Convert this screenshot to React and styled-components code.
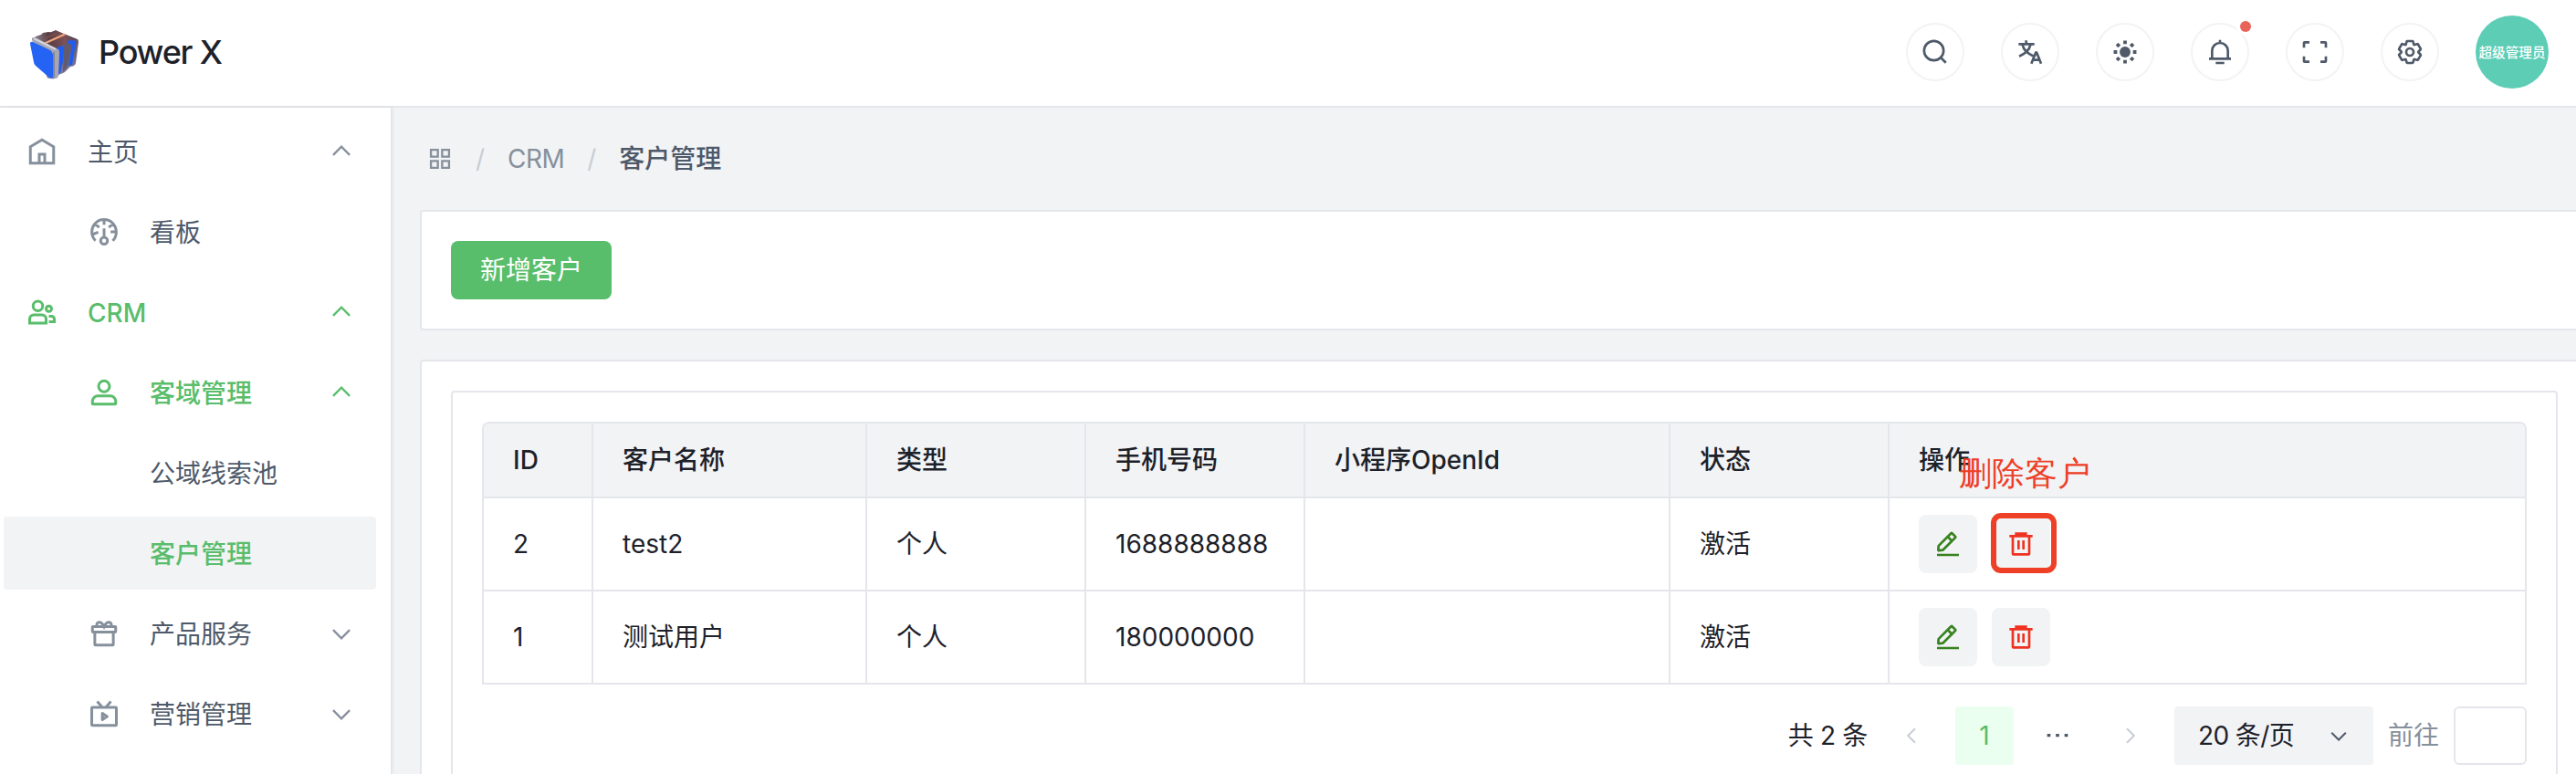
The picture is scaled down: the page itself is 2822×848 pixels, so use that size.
import React from "react";
import styled, { createGlobalStyle } from "styled-components";

const GlobalStyle = createGlobalStyle`
  *, *::before, *::after { box-sizing: border-box; }
  html, body { margin: 0; padding: 0; background: #f2f3f5; }
  body {
    font-family: Inter, "Noto Sans CJK SC", sans-serif;
    font-size: 28px;
    line-height: 44px;
    color: #1d2129;
    overflow: hidden;
  }
`;

const Page = styled.div`
  display: flex;
  flex-direction: column;
  width: 2822px;
  height: 848px;
  overflow: hidden;
`;

const Header = styled.header`
  flex: none;
  display: flex;
  align-items: center;
  justify-content: space-between;
  height: 118px;
  padding: 0 30px 2px 32px;
  background: #fff;
  border-bottom: 2px solid #e5e6eb;
`;

const Brand = styled.div`
  display: flex;
  align-items: center;
  gap: 20px;
  padding-top: 3px;
`;

const BrandName = styled.h1`
  margin: -3px 0 0;
  font-size: 36px;
  line-height: 44px;
  font-weight: 500;
  letter-spacing: -1.2px;
`;

const Tools = styled.div`
  display: flex;
  align-items: center;
  gap: 40px;
`;

const ToolButton = styled.button`
  position: relative;
  display: flex;
  align-items: center;
  justify-content: center;
  width: 64px;
  height: 64px;
  padding: 0;
  border: 2px solid #f2f3f5;
  border-radius: 50%;
  background: #fff;
  color: #4e5969;
`;

const Dot = styled.span`
  position: absolute;
  top: -4px;
  right: -4px;
  width: 12px;
  height: 12px;
  border-radius: 50%;
  background: #e9635b;
  box-shadow: 0 0 0 4px #fff;
`;

const Avatar = styled.div`
  display: flex;
  align-items: center;
  justify-content: center;
  width: 80px;
  height: 80px;
  padding-top: 1px;
  border-radius: 50%;
  background: #5dcdb6;
  color: #fff;
  font-size: 14.6px;
  font-weight: 500;
  white-space: nowrap;
`;

const Body = styled.div`
  flex: 1;
  display: flex;
  min-height: 0;
`;

const Sidebar = styled.nav`
  flex: none;
  display: flex;
  flex-direction: column;
  gap: 8px;
  width: 430px;
  padding: 8px 16px 0 4px;
  background: #fff;
  border-right: 2px solid #e5e6eb;
  box-shadow: 0 0 4px rgba(0, 0, 0, 0.06);
`;

const MenuItem = styled.div`
  flex: none;
  display: flex;
  align-items: center;
  height: 80px;
  padding-left: ${(p) => (p.$level === 0 ? 24 : p.$level === 1 ? 92 : 160)}px;
  padding-right: 24px;
  border-radius: 4px;
  background: ${(p) => (p.$selected ? "#f2f3f5" : "transparent")};
  color: ${(p) => (p.$active ? "#59bd6b" : "#4e5969")};
  font-weight: ${(p) => (p.$active ? 500 : 400)};
`;

const MenuIcon = styled.span`
  display: flex;
  margin-right: 32px;
  color: ${(p) => (p.$active ? "inherit" : "#86909c")};
`;

const MenuLabel = styled.span`
  flex: 1;
  padding-top: 1px;
  line-height: 40px;
`;

const MenuArrow = styled.span`
  display: flex;
  color: ${(p) => (p.$active ? "inherit" : "#86909c")};
`;

const Main = styled.main`
  flex: none;
  display: flex;
  flex-direction: column;
  width: 2424px;
  padding-left: 30px;
`;

const Breadcrumb = styled.div`
  flex: none;
  display: flex;
  align-items: center;
  height: 112px;
  color: #86909c;
  line-height: 48px;
`;

const Crumb = styled.span`
  display: flex;
  padding: 0 8px;
  letter-spacing: ${(p) => (p.$current ? 0 : -0.5)}px;
  color: ${(p) => (p.$current ? "#4e5969" : "#86909c")};
  font-weight: ${(p) => (p.$current ? 500 : 400)};
`;

const Separator = styled.span`
  width: 28px;
  margin: 0 8px;
  text-align: center;
  color: #c9cdd4;
`;

const Card = styled.section`
  flex: none;
  padding: 32px;
  margin-bottom: 32px;
  background: #fff;
  border: 2px solid #e5e6eb;
  border-radius: 4px;
`;

const InnerCard = styled(Card)`
  width: 2308px;
  height: 480px;
`;

const PrimaryButton = styled.button`
  display: block;
  height: 64px;
  padding: 0 32px;
  border: 0;
  border-radius: 8px;
  background: #59be6b;
  color: #fff;
  font: inherit;
  line-height: 60px;
`;

const Table = styled.div`
  border: 2px solid #e5e6eb;
  border-bottom: 0;
  border-radius: 8px 8px 0 0;
  overflow: hidden;
`;

const Row = styled.div`
  display: grid;
  grid-template-columns: 120px 300px 240px 240px 400px 240px 1fr;
  height: ${(p) => (p.$head ? 82 : 102)}px;
  border-bottom: 2px solid #e5e6eb;
  background: ${(p) => (p.$head ? "#f2f3f5" : "#fff")};
  font-weight: ${(p) => (p.$head ? 500 : 400)};
`;

const Cell = styled.div`
  position: relative;
  display: flex;
  align-items: center;
  gap: 16px;
  padding: 0 32px;
  border-right: 2px solid #e5e6eb;
  white-space: nowrap;
  &:last-child { border-right: 0; }
`;

const ActionButton = styled.button`
  position: relative;
  display: flex;
  align-items: center;
  justify-content: center;
  width: 64px;
  height: 64px;
  padding: 0;
  border: 0;
  border-radius: 8px;
  background: #f2f3f5;
  color: ${(p) => (p.$danger ? "#f03220" : "#38821f")};
`;

const Highlight = styled.span`
  position: absolute;
  left: -1px;
  top: -2px;
  width: 72px;
  height: 66px;
  border: 6px solid #ed4027;
  border-radius: 11px;
`;

const Note = styled.span`
  position: absolute;
  left: -36px;
  top: -71px;
  font-size: 36px;
  line-height: 52px;
  white-space: nowrap;
  color: #ed4027;
`;

const Pagination = styled.div`
  display: flex;
  align-items: center;
  justify-content: flex-end;
  gap: 16px;
  margin-top: 24px;
`;

const Total = styled.span`
  letter-spacing: -0.3px;
`;

const PageBox = styled.span`
  display: flex;
  align-items: center;
  justify-content: center;
  width: 64px;
  height: 64px;
  border-radius: 4px;
  background: ${(p) => (p.$active ? "#ebfff0" : "transparent")};
  color: ${(p) => (p.$active ? "#59bd6b" : p.$disabled ? "#c9cdd4" : "#4e5969")};
`;

const PageSize = styled.span`
  display: flex;
  align-items: center;
  justify-content: space-between;
  width: 218px;
  height: 64px;
  padding: 0 26px 0 26px;
  border-radius: 4px;
  background: #f2f3f5;
  letter-spacing: -0.6px;
`;

const Muted = styled.span`
  color: #86909c;
`;

const PageInput = styled.input`
  width: 80px;
  height: 64px;
  border: 2px solid #e5e6eb;
  border-radius: 6px;
  background: #fff;
`;

const Svg = styled.svg`
  display: block;
  flex: none;
  color: ${(p) => p.$tint || "inherit"};
`;

const Icon = ({ size = 28, tint, children }) => (
  <Svg width={size} height={size} viewBox="0 0 48 48" fill="none" stroke="currentColor" strokeWidth="4" $tint={tint}>
    {children}
  </Svg>
);

const shapes = {
  home: <path d="M7 17 24 7l17 10v24H7V17ZM20 28h8v13h-8V28Z" />,
  dashboard: (
    <>
      <path d="M41.808 24c.118 4.63-1.486 9.333-5.21 13m5.21-13h-8.309m8.309 0c-.112-4.38-1.767-8.694-4.627-12M24 6c5.531 0 10.07 2.404 13.18 6M24 6c-5.724 0-10.384 2.574-13.5 6.38M24 6v7.5M37.18 12 31 17.5m-20.5-5.12L17 17.5m-6.5-5.12C6.99 16.662 5.44 22.508 6.53 28m4.872 9c-2.65-2.609-4.226-5.742-4.873-9m0 0 8.97-3.5" />
      <path d="M24 32a5 5 0 1 0 0 10 5 5 0 0 0 0-10Zm0 0V19" />
    </>
  ),
  group: (
    <>
      <circle cx="18" cy="15" r="7" />
      <circle cx="34" cy="19" r="4" />
      <path d="M6 34a6 6 0 0 1 6-6h12a6 6 0 0 1 6 6v6H6v-6ZM34 30h4a4 4 0 0 1 4 4v4h-8" />
    </>
  ),
  user: (
    <>
      <path d="M7 37a8 8 0 0 1 8-8h18a8 8 0 0 1 8 8v3a1 1 0 0 1-1 1H8a1 1 0 0 1-1-1v-3Z" />
      <circle cx="24" cy="15" r="8" />
    </>
  ),
  gift: (
    <>
      <path d="M8 14h32a1 1 0 0 1 1 1v6a1 1 0 0 1-1 1H8a1 1 0 0 1-1-1v-6a1 1 0 0 1 1-1ZM10.500 22.500V40a1 1 0 0 0 1 1h25a1 1 0 0 0 1-1V22.500" />
      <path d="M13.500 14c-1-4 .500-6.500 3.500-6.500 4 0 5.500 3 7 6.500 1.500-3.500 3-6.500 7-6.500 3 0 4.500 2.500 3.500 6.500" />
    </>
  ),
  live: (
    <>
      <path d="M7 14.500h34a1 1 0 0 1 1 1V40a1 1 0 0 1-1 1H7a1 1 0 0 1-1-1V15.500a1 1 0 0 1 1-1ZM14 6l7.500 8.500M34 6l-7.500 8.500" />
      <path d="M21.500 23.500v9l7-4.500-7-4.500Z" strokeLinejoin="round" />
    </>
  ),
  search: <path d="M33.072 33.071c6.248-6.248 6.248-16.379 0-22.627-6.249-6.249-16.38-6.249-22.628 0-6.248 6.248-6.248 16.379 0 22.627 6.248 6.248 16.38 6.248 22.628 0Zm0 0 8.485 8.485" />,
  language: <path d="m42 43-2.385-6M26 43l2.384-6m11.231 0-.795-2-4.18-10h-1.28l-4.181 10-.795 2m11.231 0h-11.23M17 5l1 5M5 11h26M11 11s1.889 7.826 6.611 12.174C22.333 27.522 30 31 30 31M25 11s-1.889 7.826-6.611 12.174C13.667 27.522 6 31 6 31" />,
  sun: (
    <g fill="currentColor" stroke="none">
      <circle cx="24" cy="24" r="11" />
      <path d="M20.500 1h7v7h-7ZM20.500 40h7v7h-7ZM1 20.500h7v7H1ZM40 20.500h7v7h-7ZM10 5l5 5-5 5-5-5ZM38 5l5 5-5 5-5-5ZM10 33l5 5-5 5-5-5ZM38 33l5 5-5 5-5-5Z" />
    </g>
  ),
  bell: <path d="M24 9c7.18 0 13 5.82 13 13v13H11V22c0-7.18 5.82-13 13-13Zm0 0V4M6 35h36m-25 7h14" />,
  fullscreen: <path d="M42 17V9a1 1 0 0 0-1-1h-8M6 17V9a1 1 0 0 1 1-1h8m27 23v8a1 1 0 0 1-1 1h-8M6 31v8a1 1 0 0 0 1 1h8" />,
  settings: (
    <>
      <path d="M18.797 6.732A1 1 0 0 1 19.76 6h8.48a1 1 0 0 1 .964.732l1.285 4.628a1 1 0 0 0 1.213.7l4.651-1.2a1 1 0 0 1 1.116.468l4.24 7.344a1 1 0 0 1-.153 1.2L38.193 23.3a1 1 0 0 0 0 1.402l3.364 3.427a1 1 0 0 1 .153 1.2l-4.24 7.344a1 1 0 0 1-1.116.468l-4.65-1.2a1 1 0 0 0-1.214.7l-1.285 4.628a1 1 0 0 1-.964.732h-8.48a1 1 0 0 1-.963-.732L17.51 36.64a1 1 0 0 0-1.213-.7l-4.65 1.2a1 1 0 0 1-1.116-.468l-4.24-7.344a1 1 0 0 1 .153-1.2L9.809 24.7a1 1 0 0 0 0-1.402l-3.364-3.427a1 1 0 0 1-.153-1.2l4.24-7.344a1 1 0 0 1 1.116-.468l4.65 1.2a1 1 0 0 0 1.213-.7l1.286-4.628Z" />
      <circle cx="24" cy="24" r="6" />
    </>
  ),
  apps: <path d="M7 7h13v13H7V7ZM28 7h13v13H28V7ZM7 28h13v13H7V28ZM28 28h13v13H28V28Z" />,
  edit: <path d="m30.48 19.038 5.733-5.734a1 1 0 0 0 0-1.414l-5.586-5.586a1 1 0 0 0-1.414 0l-5.734 5.734m7 7L15.763 33.754a1 1 0 0 1-.59.286l-6.048.708a1 1 0 0 1-1.113-1.069l.477-6.31a1 1 0 0 1 .29-.631l14.7-14.7m7 7-7-7M6 42h36" />,
  trash: <path d="M5 11h5.500m0 0v29a1 1 0 0 0 1 1h25a1 1 0 0 0 1-1V11m-27 0H16m21.500 0H43m-5.500 0H32m-16 0V7h16v4m-16 0h16M20 18v15M28 18v15" />,
  down: <path d="M39.6 17.443 24.043 33 8.487 17.443" />,
  up: <path d="M39.6 30.557 24.043 15 8.487 30.557" />,
  left: <path d="M32 8.4 16.444 23.956 32 39.513" />,
  right: <path d="m16 39.513 15.556-15.557L16 8.400" />,
  more: <path d="M7 21h5.500v5H7ZM21.250 21h5.500v5h-5.500ZM35.500 21H41v5h-5.500Z" fill="currentColor" stroke="none" />,
};

const Logo = () => (
  <Svg width="56" height="56" viewBox="0 0 56 56">
    <defs>
      <linearGradient id="top" x1="0" y1="0.4" x2="1" y2="0.3">
        <stop offset="0" stopColor="#8f8c9b" />
        <stop offset="0.35" stopColor="#5a3f45" />
        <stop offset="0.7" stopColor="#7d5257" />
        <stop offset="1" stopColor="#4a4358" />
      </linearGradient>
      <linearGradient id="side" x1="0" y1="0" x2="0" y2="1">
        <stop offset="0" stopColor="#544c5e" />
        <stop offset="1" stopColor="#8580a0" />
      </linearGradient>
    </defs>
    <path d="M3 11 29 2.500 53 12q1 1 1 3l-3 23q-.500 3-3 3.500l-3 .500-6 6-3 1.500-3 1-3 4-4 1-6-1Z" fill="url(#side)" strokeLinejoin="round" />
    <path d="M4 11q4-3 9-4l2-2 6-1 3 .500L29 2l3 1.500 21 9q-6 0-10 4l-6 1-5 5-27-9Z" fill="url(#top)" />
    <path d="M17 16.500 39 6.500" stroke="#f5a57c" strokeWidth="2" />
    <path d="m15 12 14-6" stroke="#8c5048" strokeWidth="1.200" />
    <path d="M31 21q5-4 7 1l-1 14-3 13-2 1 1-20q0-6-3-7ZM42 14q7-3 9 2l-4 24-4 1 3-17q1-7-4-8Z" fill="#1f5cf2" />
    <path d="M38 22q0-3 3-4l4-1q2 0 1 4l-4 21-5 6Z" fill="#625b70" />
    <path d="M3 13q1-3 5-2l22 11q3 1 3 4l-1 26q0 2-3 3l-6-1Z" fill="#a6a6b4" />
    <path d="M26 28q0-2 2-3v29l-2 1Z" fill="#85838f" />
    <path d="m5 11 24 12" stroke="#d4d5de" strokeWidth="2" />
    <path d="M1 17q0-3 3-2l19 9q3 2 3 5v24q0 3-4 1L7 41q-2-2-2-4Z" fill="#2563f5" />
  </Svg>
);

const MENU = [
  { label: "主页", icon: "home", level: 0, arrow: "up" },
  { label: "看板", icon: "dashboard", level: 1 },
  { label: "CRM", icon: "group", level: 0, arrow: "up", active: true },
  { label: "客域管理", icon: "user", level: 1, arrow: "up", active: true },
  { label: "公域线索池", level: 2 },
  { label: "客户管理", level: 2, active: true, selected: true },
  { label: "产品服务", icon: "gift", level: 1, arrow: "down" },
  { label: "营销管理", icon: "live", level: 1, arrow: "down" },
];

const TOOLS = [
  ["search", 32],
  ["language", 32],
  ["sun", 26],
  ["bell", 32],
  ["fullscreen", 32],
  ["settings", 32],
];
const COLUMNS = ["ID", "客户名称", "类型", "手机号码", "小程序OpenId", "状态", "操作"];
const CUSTOMERS = [
  ["2", "test2", "个人", "1688888888", "", "激活"],
  ["1", "测试用户", "个人", "180000000", "", "激活"],
];

export default function App() {
  return (
    <Page>
      <GlobalStyle />
      <Header>
        <Brand>
          <Logo />
          <BrandName>Power X</BrandName>
        </Brand>
        <Tools>
          {TOOLS.map(([name, size]) => (
            <ToolButton key={name}>
              <Icon size={size}>{shapes[name]}</Icon>
              {name === "bell" && <Dot />}
            </ToolButton>
          ))}
          <Avatar>超级管理员</Avatar>
        </Tools>
      </Header>
      <Body>
        <Sidebar>
          {MENU.map((m) => (
            <MenuItem key={m.label} $level={m.level} $active={m.active} $selected={m.selected}>
              {m.icon && (
                <MenuIcon $active={m.active}>
                  <Icon size={36}>{shapes[m.icon]}</Icon>
                </MenuIcon>
              )}
              <MenuLabel>{m.label}</MenuLabel>
              {m.arrow && (
                <MenuArrow $active={m.active}>
                  <Icon size={28}>{shapes[m.arrow]}</Icon>
                </MenuArrow>
              )}
            </MenuItem>
          ))}
        </Sidebar>
        <Main>
          <Breadcrumb>
            <Crumb>
              <Icon>{shapes.apps}</Icon>
            </Crumb>
            <Separator>/</Separator>
            <Crumb>CRM</Crumb>
            <Separator>/</Separator>
            <Crumb $current>客户管理</Crumb>
          </Breadcrumb>
          <Card>
            <PrimaryButton>新增客户</PrimaryButton>
          </Card>
          <Card>
            <InnerCard>
              <Table>
                <Row $head>
                  {COLUMNS.map((c) => (
                    <Cell key={c}>{c}</Cell>
                  ))}
                </Row>
                {CUSTOMERS.map((values, r) => (
                  <Row key={values[0]}>
                    {values.map((v, i) => (
                      <Cell key={i}>{v}</Cell>
                    ))}
                    <Cell>
                      <ActionButton>
                        <Icon size={32}>{shapes.edit}</Icon>
                      </ActionButton>
                      <ActionButton $danger>
                        <Icon size={32}>{shapes.trash}</Icon>
                        {r === 0 && (
                          <>
                            <Highlight />
                            <Note>删除客户</Note>
                          </>
                        )}
                      </ActionButton>
                    </Cell>
                  </Row>
                ))}
              </Table>
              <Pagination>
                <Total>共 2 条</Total>
                <PageBox $disabled>
                  <Icon size={24}>{shapes.left}</Icon>
                </PageBox>
                <PageBox $active>1</PageBox>
                <PageBox>
                  <Icon size={32}>{shapes.more}</Icon>
                </PageBox>
                <PageBox $disabled>
                  <Icon size={24}>{shapes.right}</Icon>
                </PageBox>
                <PageSize>
                  20 条/页
                  <Icon size={24} tint="#4e5969">{shapes.down}</Icon>
                </PageSize>
                <Muted>前往</Muted>
                <PageInput />
              </Pagination>
            </InnerCard>
          </Card>
        </Main>
      </Body>
    </Page>
  );
}
